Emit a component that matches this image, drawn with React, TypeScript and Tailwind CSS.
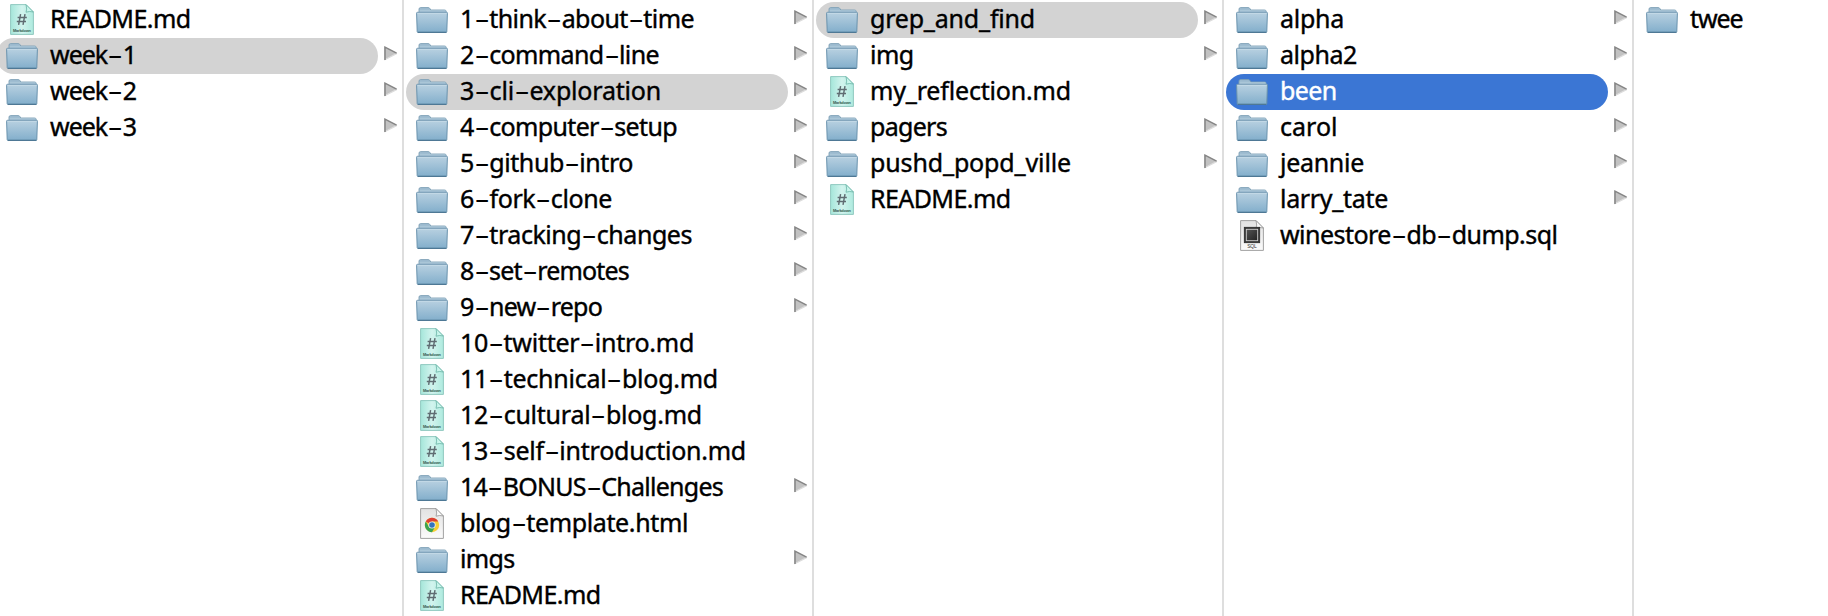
import { Fragment, useLayoutEffect, useRef, useState } from "react";

type Kind = "folder" | "md" | "html" | "sql";
type Entry = { name: string; kind: Kind; width: number; state?: "path" | "active" };

const f = (name: string, width: number, state?: Entry["state"]): Entry => ({ name, kind: "folder", width, state });
const d = (name: string, width: number, kind: Kind = "md"): Entry => ({ name, kind, width });

const columns: Entry[][] = [
  [d("README.md", 140.5), f("week-1", 86, "path"), f("week-2", 86), f("week-3", 86)],
  [
    f("1-think-about-time", 234),
    f("2-command-line", 199),
    f("3-cli-exploration", 201, "path"),
    f("4-computer-setup", 217),
    f("5-github-intro", 173),
    f("6-fork-clone", 152),
    f("7-tracking-changes", 232),
    f("8-set-remotes", 169),
    f("9-new-repo", 142),
    d("10-twitter-intro.md", 234),
    d("11-technical-blog.md", 258),
    d("12-cultural-blog.md", 242),
    d("13-self-introduction.md", 286),
    f("14-BONUS-Challenges", 263),
    d("blog-template.html", 228, "html"),
    f("imgs", 54.5),
    d("README.md", 140.5),
  ],
  [
    f("grep_and_find", 165, "path"),
    f("img", 43.5),
    d("my_reflection.md", 201),
    f("pagers", 77),
    f("pushd_popd_ville", 201),
    d("README.md", 140.5),
  ],
  [
    f("alpha", 64),
    f("alpha2", 77),
    f("been", 56.5, "active"),
    f("carol", 57.5),
    f("jeannie", 84),
    f("larry_tate", 108),
    d("winestore-db-dump.sql", 277.5, "sql"),
  ],
  [f("twee", 52.5)],
];

function Folder() {
  return (
    <svg width="32" height="27" viewBox="0 0 32 27" className="mt-[5px] block">
      <path d="M3 7V2.2Q3 .6 4.6.6H12.2Q13.4.6 14 1.7L14.8 3H28.6Q30.2 3 30.2 4.6V7Z" fill="#9fbdd1" stroke="#7d9fb5" strokeWidth=".9" />
      <path d="M3.6 4H29.6" stroke="#b4cedd" strokeWidth="1" />
      <path d="M.6 6.2Q.6 5.3 1.5 5.3H30.6Q31.5 5.3 31.4 6.2L30.8 24.6Q30.8 25.5 29.9 25.5H2.2Q1.3 25.5 1.2 24.6Z" fill="url(#folder)" stroke="#6992ad" strokeWidth="1" />
      <path d="M1.5 6.3H30.6" stroke="#c9dde8" strokeWidth=".8" />
      <path d="M1.8 25.3H30.3" stroke="#4b7592" strokeWidth="1.2" />
    </svg>
  );
}

function Page({ kind }: { kind: Kind }) {
  const md = kind === "md";
  return (
    <svg width="24" height="32" viewBox="0 0 24 32" className="ml-1 mt-[2px] block overflow-visible">
      <path d="M.6.6H16L23.4 8V30.4H.6Z" fill={md ? "url(#mint)" : "url(#paper)"} stroke={md ? "#91c9c0" : "#a2a2a2"} strokeWidth="1" />
      <path d="M16 .6Q17.4 5.8 16 8.2Q19.5 6.9 23.4 8Z" fill={md ? "#c9f5ec" : "#fafafa"} stroke={md ? "#68b2a5" : "#929292"} strokeWidth=".8" />
      {md && (
        <>
          <path d="M10.6 10.2L8.6 20.8M15 10.2L13 20.8M7.6 13.5H16.8M6.8 17.4H16" stroke="#5f6c72" strokeWidth="1.45" fill="none" />
          <text x="12" y="28.4" textAnchor="middle" fontSize="3.9" fontWeight="700" textLength="18" fill="#34584f" className="font-['Liberation_Sans',sans-serif]">Markdown</text>
        </>
      )}
      {kind === "html" && (
        <>
          <circle cx="12" cy="17" r="7.2" fill="#f7ce35" />
          <path d="M12 17L5.8 13.4A7.2 7.2 0 0 1 18.2 13.4H12Z" fill="#dc4034" />
          <path d="M5.8 13.4A7.2 7.2 0 0 0 12 24.2L15.1 18.8L12 17L8.9 18.8Z" fill="#3ba351" />
          <circle cx="12" cy="17" r="3.6" fill="#f3f6f5" />
          <circle cx="12" cy="17" r="2.8" fill="#3474bd" />
        </>
      )}
      {kind === "sql" && (
        <>
          <rect x="4.2" y="7.2" width="15.6" height="15.6" fill="#333" stroke="#1e1e1e" strokeWidth=".6" />
          <rect x="6.3" y="9.3" width="11.4" height="11.4" fill="url(#screen)" stroke="#d0d0d0" strokeWidth=".9" />
          <text x="12" y="28.3" textAnchor="middle" fontSize="5" textLength="9.5" fill="#333" className="font-['Liberation_Sans',sans-serif]">SQL</text>
        </>
      )}
    </svg>
  );
}

function Arrow() {
  return (
    <svg width="14" height="15" viewBox="0 0 14 15" className="ml-[6px] mt-[8px] block shrink-0">
      <path d="M.3.6L13 7.2L.3 14Z" fill="#c2c2c2" />
      <path d="M.3 14L13 7.4" stroke="#dcdcdc" strokeWidth="1.2" />
      <path d="M1 14V1.2L12.6 7.2" fill="none" stroke="#858585" strokeWidth="1.5" />
    </svg>
  );
}

function Label({ name, width }: { name: string; width: number }) {
  const ref = useRef<HTMLSpanElement>(null);
  const [tracking, setTracking] = useState(0);
  useLayoutEffect(() => {
    const el = ref.current;
    const letters = name.replaceAll("-", "").length;
    if (el) setTracking((width - el.getBoundingClientRect().width) / letters);
  }, [name, width]);
  return (
    <span ref={ref} className="whitespace-nowrap" style={{ letterSpacing: tracking }}>
      {name.split("-").map((part, i) => (
        <Fragment key={i}>
          {i > 0 && <span className="inline-block w-[15.5px] origin-left translate-x-[0.5px] scale-x-[1.9] [-webkit-text-stroke:0]">-</span>}
          {part}
        </Fragment>
      ))}
    </span>
  );
}

function Row({ name, kind, width, state }: Entry) {
  const tone = state === "active" ? "bg-[#3b76d4] text-white" : state === "path" ? "bg-[#d3d3d3] text-black" : "text-black";
  return (
    <li className="flex h-9 pl-[2px]">
      <div className={`flex h-9 w-[382px] rounded-full pl-[10px] ${tone}`}>
        <div className="w-[32px] shrink-0">{kind === "folder" ? <Folder /> : <Page kind={kind} />}</div>
        <div className="ml-[12px] text-[25px] leading-[33px] [-webkit-text-stroke:0.4px]">
          <Label name={name} width={width} />
        </div>
      </div>
      {kind === "folder" && name !== "twee" && <Arrow />}
    </li>
  );
}

export default function App() {
  return (
    <main className="h-[616px] w-full overflow-hidden bg-white font-['Noto_Sans',sans-serif]">
      <svg width="0" height="0" className="absolute">
        <defs>
          <linearGradient id="folder" x1="0" y1="0" x2="0" y2="1">
            <stop offset="0" stopColor="#b9d1e1" />
            <stop offset="1" stopColor="#82aecb" />
          </linearGradient>
          <linearGradient id="mint" x1="0" y1="0" x2="1" y2="0">
            <stop offset="0" stopColor="#a5e6da" />
            <stop offset=".5" stopColor="#d2f4ee" />
            <stop offset="1" stopColor="#aeeade" />
          </linearGradient>
          <linearGradient id="paper" x1="0" y1="0" x2="0" y2="1">
            <stop offset="0" stopColor="#e2e2e2" />
            <stop offset="1" stopColor="#fbfbfb" />
          </linearGradient>
          <linearGradient id="screen" x1="0" y1="0" x2="1" y2="1">
            <stop offset="0" stopColor="#555" />
            <stop offset="1" stopColor="#222" />
          </linearGradient>
        </defs>
      </svg>
      <div className="-ml-[6px] flex h-full">
        {columns.map((entries, i) => (
          <ul key={i} className={`h-full w-[410px] shrink-0 pt-[2px] ${i < 4 ? "border-r-2 border-[#dedede]" : ""}`}>
            {entries.map((entry) => (
              <Row key={entry.name} {...entry} />
            ))}
          </ul>
        ))}
      </div>
    </main>
  );
}
